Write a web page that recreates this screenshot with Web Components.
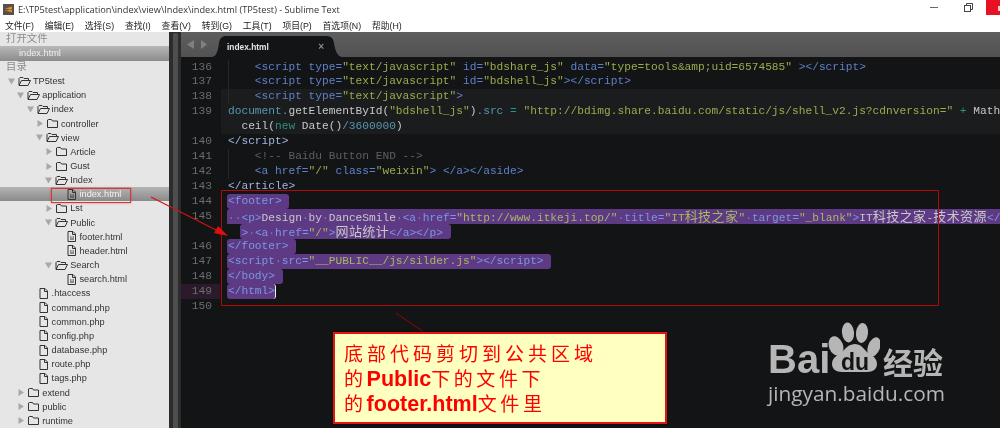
<!DOCTYPE html>
<html lang="zh">
<head>
<meta charset="utf-8">
<title>Sublime Text</title>
<style>
  html, body { margin: 0; padding: 0; background: #131416; }
</style>
</head>
<body>
<app-shell>
  <title-bar>E:\TP5test\application\index\view\Index\index.html (TP5test) - Sublime Text</title-bar>
  <menu-bar></menu-bar>
  <main-area>
    <side-bar>
      <tree-row depth="0" kind="open">TP5test</tree-row>
      <tree-row depth="1" kind="open">application</tree-row>
      <tree-row depth="2" kind="open">index</tree-row>
      <tree-row depth="3" kind="closed">controller</tree-row>
      <tree-row depth="3" kind="open">view</tree-row>
      <tree-row depth="4" kind="closed">Article</tree-row>
      <tree-row depth="4" kind="closed">Gust</tree-row>
      <tree-row depth="4" kind="open">Index</tree-row>
      <tree-row depth="5" kind="code" selected>index.html</tree-row>
      <tree-row depth="4" kind="closed">Lst</tree-row>
      <tree-row depth="4" kind="open">Public</tree-row>
      <tree-row depth="5" kind="code">footer.html</tree-row>
      <tree-row depth="5" kind="code">header.html</tree-row>
      <tree-row depth="4" kind="open">Search</tree-row>
      <tree-row depth="5" kind="code">search.html</tree-row>
      <tree-row depth="2" kind="file">.htaccess</tree-row>
      <tree-row depth="2" kind="file">command.php</tree-row>
      <tree-row depth="2" kind="file">common.php</tree-row>
      <tree-row depth="2" kind="file">config.php</tree-row>
      <tree-row depth="2" kind="file">database.php</tree-row>
      <tree-row depth="2" kind="file">route.php</tree-row>
      <tree-row depth="2" kind="file">tags.php</tree-row>
      <tree-row depth="1" kind="closed">extend</tree-row>
      <tree-row depth="1" kind="closed">public</tree-row>
      <tree-row depth="1" kind="closed">runtime</tree-row>
    </side-bar>
    <pane-split></pane-split>
    <editor-pane></editor-pane>
  </main-area>
  <note-layer></note-layer>
  <baidu-logo></baidu-logo>
</app-shell>

<script>
const sans = '"Liberation Sans", "Noto Sans CJK SC", sans-serif';

class AppShell extends HTMLElement {
  connectedCallback() {
    this.attachShadow({ mode: 'open' }).innerHTML = `
      <style>
        :host { display: flex; flex-direction: column; position: relative; width: 1000px; height: 428px; overflow: hidden; background: #fff; filter: blur(.35px); }
      </style>
      <slot></slot>`;
  }
}

class TitleBar extends HTMLElement {
  connectedCallback() {
    this.attachShadow({ mode: 'open' }).innerHTML = `
      <style>
        :host { display: flex; align-items: center; height: 18px; flex: none; background: #fff; color: #333; font: 9.2px "Open Sans", sans-serif; position: relative; }
        .logo { margin: 0 4px 0 3px; flex: none; }
        .min { position: absolute; left: 930px; top: 7px; width: 8px; height: 1px; background: #666; }
        .max { position: absolute; left: 964px; top: 3px; }
        .close { position: absolute; left: 986px; top: 0; width: 14px; height: 15px; background: #e81123; }
        .close::after { content: ""; position: absolute; right: 0; top: 6px; width: 2px; height: 5px; background: #f7c6ca; }
      </style>
      <svg class="logo" width="11" height="11" viewBox="0 0 11 11">
        <rect width="11" height="11" fill="#55504a"/>
        <path d="M2 4.5 9 2.5V5L2 7zM2 6.5 9 8.5V6L2 4.5z" fill="#e0882a"/>
      </svg>
      <slot></slot>
      <span class="min"></span>
      <svg class="max" width="9" height="9" viewBox="0 0 9 9" fill="none" stroke="#444">
        <path d="M2.5 2V.5h6v6H7"/><rect x=".5" y="2.5" width="6" height="6"/>
      </svg>
      <span class="close"></span>`;
  }
}

class MenuBar extends HTMLElement {
  connectedCallback() {
    const items = ['文件(F)', '编辑(E)', '选择(S)', '查找(I)', '查看(V)', '转到(G)', '工具(T)', '项目(P)', '首选项(N)', '帮助(H)'];
    this.attachShadow({ mode: 'open' }).innerHTML = `
      <style>
        :host { display: flex; align-items: center; height: 14px; flex: none; padding-left: 5px; background: #fff; color: #222; font: 8.8px ${sans}; gap: 10.8px; }
      </style>
      ${items.map(i => `<span>${i}</span>`).join('')}`;
  }
}

class MainArea extends HTMLElement {
  connectedCallback() {
    this.attachShadow({ mode: 'open' }).innerHTML = `
      <style>
        :host { display: flex; flex: 1; min-height: 0; }
      </style>
      <slot></slot>`;
  }
}

class SideBar extends HTMLElement {
  connectedCallback() {
    this.attachShadow({ mode: 'open' }).innerHTML = `
      <style>
        :host { display: flex; flex-direction: column; flex: none; width: 169px; background: #e6e6e6; font: 9.2px ${sans}; color: #333; overflow: hidden; }
        .label { height: 14px; line-height: 14px; padding-left: 6px; font-size: 10.4px; color: #8c8c8c; flex: none; }
        .open { height: 15px; line-height: 15px; padding-left: 19px; color: #f0f0f0; background: linear-gradient(#b8b8b8, #8c8c8c); flex: none; margin-bottom: -1px; }
      </style>
      <div class="label">打开文件</div>
      <div class="open">index.html</div>
      <div class="label">目录</div>
      <slot></slot>`;
  }
}

class PaneSplit extends HTMLElement {
  connectedCallback() {
    this.attachShadow({ mode: 'open' }).innerHTML = `
      <style>
        :host { display: flex; flex: none; width: 12px; box-sizing: border-box; padding: 1px 3px 0 4px; background: #2c2c2c; }
        div { flex: 1; background: #4e4e4e; border-radius: 2px 2px 0 0; }
      </style>
      <div></div>`;
  }
}

const rowIcons = {
  open: `<path d="M1 9V2.5L2 1.5H5L6 2.5H10.5V4M1 9.5H10L12.5 4.5H3.5L1 9.5Z" fill="none" stroke="#333"/>`,
  closed: `<path d="M1.5 9.5V2L2.5 1.5H5.5L6.5 3H11.5V9.5Z" fill="none" stroke="#333"/>`,
  file: `<path d="M3 .5H8L10.5 3V10.5H3ZM7.5.5V3.5H10.5" fill="none" stroke="#333"/>`,
  code: `<path d="M3 .5H8L10.5 3V10.5H3ZM7.5.5V3.5H10.5" fill="none" stroke="#333"/><path d="M5 6h1.5M5 8h4M7.5 6H9" stroke="#333"/>`
};

class TreeRow extends HTMLElement {
  connectedCallback() {
    const depth = +this.getAttribute('depth');
    const kind = this.getAttribute('kind');
    let arrow = '';
    if (kind === 'open') arrow = '<path d="M0 1.5H7L3.5 7.5Z" fill="#a8a8a8"/>';
    if (kind === 'closed') arrow = '<path d="M1.5 1V8L7 4.5Z" fill="#a8a8a8"/>';
    this.attachShadow({ mode: 'open' }).innerHTML = `
      <style>
        :host { display: flex; align-items: center; gap: 2px; height: 14.17px; flex: none; box-sizing: border-box; padding-left: ${8 + depth * 9.3}px; white-space: nowrap; }
        :host([selected]) { background: linear-gradient(#b4b4b4, #8a8a8a); color: #f2f2f2; }
        svg { flex: none; }
      </style>
      <svg width="8" height="9" viewBox="0 0 8 9">${arrow}</svg>
      <svg width="13" height="11" viewBox="0 0 13 11">${rowIcons[kind]}</svg>
      <slot></slot>`;
  }
}

// [x:text] marks a token, x is the colour class below
const codeRows = [
  { n: 136, g: 1, text: '    [t:<script type=][s:"text/javascript"] [t:id=][s:"bdshare_js"] [t:data=][s:"type=tools&amp;uid=6574585"] [t:><\/script>]' },
  { n: 137, g: 1, text: '    [t:<script type=][s:"text/javascript"] [t:id=][s:"bdshell_js"][t:><\/script>]' },
  { n: 138, g: 1, hi: 1, text: '    [t:<script type=][s:"text/javascript"][t:>]' },
  { n: 139, hi: 1, text: '[c:document.]getElementById([s:"bdshell_js"])[c:.src] [o:=] [s:"http://bdimg.share.baidu.com/static/js/shell_v2.js?cdnversion="] [o:+] Math.' },
  { n: '', hi: 1, text: '  ceil([o:new] Date()[c:/3600000])' },
  { n: 140, text: '[e:<\/script>]' },
  { n: 141, g: 1, text: '    [m:<\!-- Baidu Button END -->]' },
  { n: 142, g: 1, text: '    [t:<a href=][s:"/"] [t:class=][s:"weixin"][t:> </a></aside>]' },
  { n: 143, text: '[e:</article>]' },
  { n: 144, sel: '[t:<footer>]\u00a0' },
  { n: 145, sel: '··[t:<p>]Design·by·DanceSmile·[t:<a·href=][s:"http://www.itkeji.top/"]·[t:title=][s:"IT科技之家"]·[t:target=][s:"_blank"][t:>]IT科技之家-技术资源[t:</a>]' },
  { n: '', pre: '  ', sel: '[t:>]·[t:<a·href=][s:"/"][t:>]网站统计[t:</a></p>]\u00a0' },
  { n: 146, sel: '[t:</footer>]\u00a0' },
  { n: 147, sel: '[t:<script·src=][s:"__PUBLIC__/js/silder.js"][t:><\/script>]\u00a0' },
  { n: 148, sel: '[t:</body>]\u00a0' },
  { n: 149, cur: 1, sel: '[t:</html>]' },
  { n: 150, text: '' }
];

function paint(src) {
  return src
    .replace(/&/g, '&amp;')
    .replace(/</g, '&lt;')
    .replace(/\[(\w):([^\]]*)\]/g, '<span class="$1">$2</span>')
    .replace(/[\u4e00-\u9fff]+/g, m => `<span class="cjk">${m}</span>`)
    .replace(/·/g, '<span class="w">·</span>');
}

class EditorPane extends HTMLElement {
  connectedCallback() {
    const rows = codeRows.map(r => {
      const body = r.sel !== undefined
        ? `${r.pre || ''}<span class="sel${r.n === 145 ? ' open-end' : ''}">${paint(r.sel)}</span>`
        : paint(r.text);
      const guide = r.g ? '<span class="guide"></span>' : '';
      return `<div class="row${r.hi ? ' hi' : ''}${r.cur ? ' cur' : ''}"><div class="num">${r.n}</div><div class="code">${guide}${body}</div></div>`;
    }).join('');
    this.attachShadow({ mode: 'open' }).innerHTML = `
      <style>
        :host { display: flex; flex-direction: column; flex: 1; min-width: 0; background: #131416; }
        .tabs { display: flex; align-items: flex-end; height: 25px; flex: none; background: linear-gradient(#5e5e5e, #525252); }
        .nav { display: flex; gap: 6px; align-self: center; padding-left: 6px; width: 25px; flex: none; }
        .tab { position: relative; width: 130px; height: 21px; display: flex; align-items: center; justify-content: space-between; box-sizing: border-box; padding: 0 18px 0 15px; font: bold 8.4px ${sans}; color: #e4e4e4; }
        .tab svg.shape { position: absolute; left: 0; top: 0; }
        .tab span { position: relative; }
        .tab .x { color: #8a8a8a; font-size: 10px; }
        .lines { padding-top: 2.5px; font: 11.2px/14.94px "Liberation Mono", monospace; color: #c8c8c8; }
        .row { display: flex; height: 14.94px; white-space: pre; overflow: hidden; }
        .num { width: 39px; box-sizing: border-box; padding-right: 8px; text-align: right; color: #6c6c6c; flex: none; }
        .cur .num { background: #2b1a2c; }
        .code { flex: 1; padding-left: 7px; overflow: hidden; position: relative; height: 14.94px; margin-left: 1px; }
        .hi .code { background: #1a1c1e; }
        .guide { position: absolute; left: 7px; top: 0; bottom: 0; width: 1px; background: #26282a; }
        .t { color: #5f80c8; }
        .sel .t { color: #7b97e4; }
        .s { color: #9aab4c; }
        .sel .s { color: #a9b860; }
        .c { color: #5796ae; }
        .o { color: #2f8f80; }
        .e { color: #a3b4e0; }
        .m { color: #5f5f5f; }
        .w { color: #8f75ad; }
        .cjk { font: 13px/14.94px "Noto Sans CJK SC", sans-serif; letter-spacing: .44px; }
        .sel { display: inline-block; height: 14.94px; vertical-align: top; background: #5e3a84; border-radius: 3px; padding: 0 1px; margin-left: -1px; }
        .sel.open-end { border-radius: 3px 0 0 0; min-width: 900px; }
        .cur .sel { border-right: 1px solid #eee; padding-right: 0; }
      </style>
      <div class="tabs">
        <div class="nav">
          <svg width="8" height="9" viewBox="0 0 8 9"><path d="M7 0V9L0 4.5Z" fill="#808080"/></svg>
          <svg width="6" height="9" viewBox="0 0 6 9"><path d="M0 0V9L6 4.5Z" fill="#808080"/></svg>
        </div>
        <div class="tab">
          <svg class="shape" width="130" height="21" viewBox="0 0 130 21"><path d="M0 21C5 20 6 14 7 7 8 2 10 0 14 0H114C119 0 121 2 122 7 123 14 125 20 130 21Z" fill="#131416"/></svg>
          <span>index.html</span><span class="x">×</span>
        </div>
      </div>
      <div class="lines">${rows}</div>`;
  }
}

class NoteLayer extends HTMLElement {
  connectedCallback() {
    this.attachShadow({ mode: 'open' }).innerHTML = `
      <style>
        :host { position: absolute; inset: 0; pointer-events: none; display: block; }
        .box { position: absolute; box-sizing: border-box; }
        .big { left: 221px; top: 190px; width: 718px; height: 116px; border: 1px solid #b20a0a; }
        .small { left: 51px; top: 188px; width: 80px; height: 15px; border: 1.5px solid #d9343a; box-shadow: 0 0 2px rgba(200,40,40,.6); }
        svg { position: absolute; left: 0; top: 0; }
        .note { position: absolute; left: 333px; top: 332px; width: 334px; height: 92px; box-sizing: border-box; background: #ffffc0; border: 2px solid #e21414; box-shadow: 0 0 2px #000; padding: 6px 0 0 9px; color: #f00; font: 19px/25px "Noto Sans CJK SC", sans-serif; }
        .note div { white-space: nowrap; height: 25px; }
        .wide { letter-spacing: 4px; }
        .wide2 { letter-spacing: 3.6px; }
        b { font: bold 21.5px/25px "Liberation Sans", sans-serif; letter-spacing: 0; }
      </style>
      <div class="box big"></div>
      <div class="box small"></div>
      <svg width="1000" height="428" viewBox="0 0 1000 428">
        <path d="M151 197 220 232" stroke="#d11414" stroke-width="1.2"/>
        <path d="M228 236 214 233 218 226Z" fill="#e01010"/>
        <path d="M396 313 425 333" stroke="#8a0a0a" stroke-width="1"/>
      </svg>
      <div class="note">
        <div class="wide">底部代码剪切到公共区域</div>
        <div class="wide2">的<b>Public</b>下的文件下</div>
        <div class="wide2">的<b>footer.html</b>文件里</div>
      </div>`;
  }
}

class BaiduLogo extends HTMLElement {
  connectedCallback() {
    this.attachShadow({ mode: 'open' }).innerHTML = `
      <style>
        :host { position: absolute; left: 768px; top: 322px; display: flex; flex-direction: column; color: #b6b6b6; }
        .top { display: flex; align-items: flex-end; height: 60px; }
        .bai { font: bold 40px/40px "Liberation Sans", sans-serif; width: 60px; margin-bottom: 3.5px; white-space: nowrap; }
        .jy { font: bold 30px/30px "Noto Sans CJK SC", sans-serif; margin: 0 0 6px 3px; white-space: nowrap; }
        .url { font: 20.8px/24px "Open Sans", sans-serif; margin-top: -1px; white-space: nowrap; }
        svg { flex: none; margin-bottom: 4px; }
        text { font: bold 23px "Liberation Sans", sans-serif; fill: #131416; }
      </style>
      <div class="top">
        <span class="bai">Bai</span>
        <svg width="52" height="56" viewBox="0 0 52 56">
          <g fill="#b6b6b6">
            <ellipse cx="8" cy="24" rx="7" ry="10" transform="rotate(-20 8 24)"/>
            <ellipse cx="20" cy="10.5" rx="6" ry="10" transform="rotate(-6 20 10.5)"/>
            <ellipse cx="34" cy="11" rx="6" ry="10" transform="rotate(6 34 11)"/>
            <ellipse cx="46" cy="25" rx="6" ry="10" transform="rotate(20 46 25)"/>
            <path d="M4 42C4 34 12 33 16 28 19 24 23 22 27 22 31 22 34 24 37 28 41 33 49 34 49 42 49 47 45 50 39 50H14C8 50 4 47 4 42Z"/>
          </g>
          <text x="13" y="47.5">du</text>
        </svg>
        <span class="jy">经验</span>
      </div>
      <div class="url">jingyan.baidu.com</div>`;
  }
}

customElements.define('app-shell', AppShell);
customElements.define('title-bar', TitleBar);
customElements.define('menu-bar', MenuBar);
customElements.define('main-area', MainArea);
customElements.define('side-bar', SideBar);
customElements.define('pane-split', PaneSplit);
customElements.define('tree-row', TreeRow);
customElements.define('editor-pane', EditorPane);
customElements.define('note-layer', NoteLayer);
customElements.define('baidu-logo', BaiduLogo);
</script>
</body>
</html>
